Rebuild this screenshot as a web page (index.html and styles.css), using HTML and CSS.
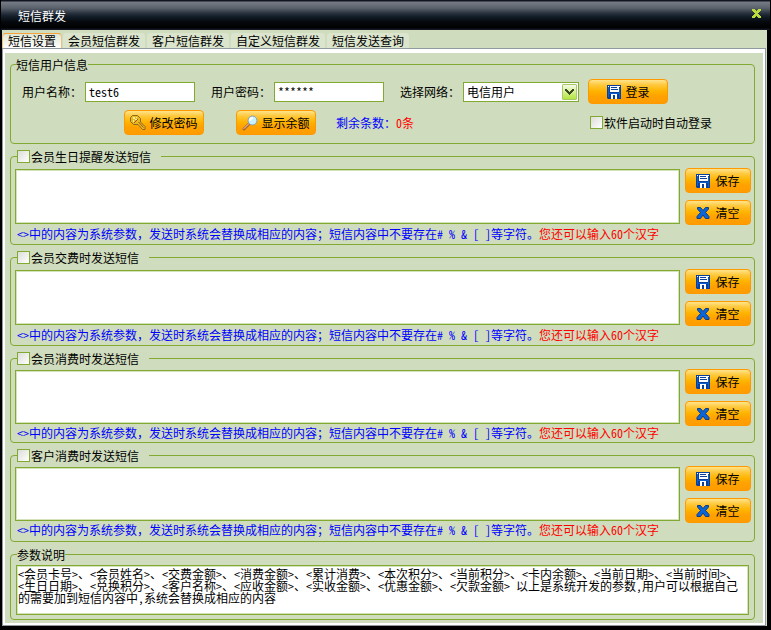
FILE: index.html
```
<!DOCTYPE html>
<html lang="zh-CN">
<head>
    <meta charset="UTF-8">
    <meta name="viewport" content="width=device-width, initial-scale=1.0">
    <title>短信群发</title>
    <link rel="stylesheet" href="styles.css">
</head>
<body>
    <!-- shared icons -->
    <svg class="defs" aria-hidden="true">
        <symbol id="icon-save" viewBox="0 0 14 14">
            <path fill="#0a3f9c" d="M0 0h14v14H1L0 13z"/>
            <path fill="#0d5fd0" d="M1 1h1v11H1zM12 3h1v10h-1zM2 8h10v1H2z"/>
            <path fill="#fff" d="M3 1h9v6H3zM4 9h6v5H4z"/>
            <path fill="#0a3f9c" d="M4 2h6v1H4zM4 4h7v1H4zM6 10h2v4H6z"/>
            <path fill="#fff" d="M1 1h1v1H1zM12 1h1v1h-1z"/>
        </symbol>
        <symbol id="icon-clear" viewBox="0 0 14 14">
            <path fill="#0a66d6" stroke="#0a3c8c" d="M1.5 1.5h3L7 4.5l2.500-3h3v1.500L9.500 6.500l3.500 4v2H9.500L7 9l-2.500 3.500H1v-2l3.500-4L1.500 3z"/>
        </symbol>
    </svg>

    <div class="window">
        <header class="titlebar">
            <h1>短信群发</h1>
            <button class="close" type="button" aria-label="关闭">
                <svg width="9" height="9" viewBox="0 0 9 9"><path fill="#b9dc3c" d="M0 0h3v1h1v1h1V1h1V0h3v2H8v1H7v1H6v1h1v1h1v1h1v2H6V8H5V7H4v1H3v1H0V7h1V6h1V5h1V4H2V3H1V2H0z"/></svg>
            </button>
        </header>

        <nav class="tabs">
            <button class="tab active" type="button">短信设置</button>
            <button class="tab" type="button">会员短信群发</button>
            <button class="tab" type="button">客户短信群发</button>
            <button class="tab" type="button">自定义短信群发</button>
            <button class="tab" type="button">短信发送查询</button>
        </nav>

        <main class="panel">
            <form class="page">
                <fieldset class="group account">
                    <legend>短信用户信息</legend>
                    <div class="row">
                        <label for="user">用户名称：</label>
                        <input class="text" id="user" type="text" value="test6">
                        <label for="pass">用户密码：</label>
                        <input class="text" id="pass" type="text" value="******">
                        <label for="network">选择网络：</label>
                        <span class="select">
                            <select id="network">
                                <option>电信用户</option>
                            </select>
                            <span class="arrow"><svg width="9" height="6" viewBox="0 0 9 6"><path fill="#3c4a1e" d="M0 0h2v1h1v1h1v1h1V2h1V1h1V0h2v2H8v1H7v1H6v1H5v1H4V5H3V4H2V3H1V2H0z"/></svg></span>
                        </span>
                        <button class="btn wide" type="button"><svg width="14" height="14"><use href="#icon-save"/></svg>登录</button>
                    </div>
                    <div class="row actions">
                        <button class="btn wide" type="button">
                            <svg width="16" height="16" viewBox="0 0 16 16">
                                <path fill="#e8b820" stroke="#8c6a1c" d="M2.500.500h5l3 3v3.500l4.500 4.500v3h-2.500L8 9.500H3.500l-3-3v-4z"/>
                                <path fill="#fff0a0" d="M3 2h2v2H3zM6 2h1v1H6zM5 4h2v1H5zM3 5h1v2H3z"/>
                                <path stroke="#a4561c" d="M4 8l4-4M8.500 7l5 5.500"/>
                            </svg>修改密码</button>
                        <button class="btn wide" type="button">
                            <svg width="16" height="16" viewBox="0 0 16 16">
                                <path stroke="#b06a30" stroke-width="3" stroke-linecap="round" d="M2 14l5-5"/>
                                <path stroke="#f0d0b0" stroke-linecap="round" d="M2 13.500l5-5"/>
                                <circle cx="10.500" cy="5.500" r="4.500" fill="#c4f2ff" stroke="#8a9ab8"/>
                                <path stroke="#fff" stroke-width="2" fill="none" d="M8 6q0-3 3-3"/>
                            </svg>显示余额</button>
                        <span class="balance">剩余条数：<b>0条</b></span>
                        <label class="check auto"><input type="checkbox">软件启动时自动登录</label>
                    </div>
                </fieldset>

                <fieldset class="group message">
                    <legend><label class="check"><input type="checkbox">会员生日提醒发送短信</label></legend>
                    <div class="editor">
                        <textarea aria-label="会员生日提醒发送短信"></textarea>
                        <div class="side">
                            <button class="btn" type="button"><svg width="14" height="14"><use href="#icon-save"/></svg>保存</button>
                            <button class="btn" type="button"><svg width="14" height="14"><use href="#icon-clear"/></svg>清空</button>
                        </div>
                    </div>
                    <p class="hint">&lt;&gt;<span class="full">中的内容为系统参数，发送时系统会替换成相应的内容；短信内容中不要存在</span># % &amp; [ ]等字符。<b>您还可以输入60个汉字</b></p>
                </fieldset>

                <fieldset class="group message">
                    <legend><label class="check"><input type="checkbox">会员交费时发送短信</label></legend>
                    <div class="editor">
                        <textarea aria-label="会员交费时发送短信"></textarea>
                        <div class="side">
                            <button class="btn" type="button"><svg width="14" height="14"><use href="#icon-save"/></svg>保存</button>
                            <button class="btn" type="button"><svg width="14" height="14"><use href="#icon-clear"/></svg>清空</button>
                        </div>
                    </div>
                    <p class="hint">&lt;&gt;<span class="full">中的内容为系统参数，发送时系统会替换成相应的内容；短信内容中不要存在</span># % &amp; [ ]等字符。<b>您还可以输入60个汉字</b></p>
                </fieldset>

                <fieldset class="group message compact">
                    <legend><label class="check"><input type="checkbox">会员消费时发送短信</label></legend>
                    <div class="editor">
                        <textarea aria-label="会员消费时发送短信"></textarea>
                        <div class="side">
                            <button class="btn" type="button"><svg width="14" height="14"><use href="#icon-save"/></svg>保存</button>
                            <button class="btn" type="button"><svg width="14" height="14"><use href="#icon-clear"/></svg>清空</button>
                        </div>
                    </div>
                    <p class="hint">&lt;&gt;<span class="full">中的内容为系统参数，发送时系统会替换成相应的内容；短信内容中不要存在</span># % &amp; [ ]等字符。<b>您还可以输入60个汉字</b></p>
                </fieldset>

                <fieldset class="group message compact last">
                    <legend><label class="check"><input type="checkbox">客户消费时发送短信</label></legend>
                    <div class="editor">
                        <textarea aria-label="客户消费时发送短信"></textarea>
                        <div class="side">
                            <button class="btn" type="button"><svg width="14" height="14"><use href="#icon-save"/></svg>保存</button>
                            <button class="btn" type="button"><svg width="14" height="14"><use href="#icon-clear"/></svg>清空</button>
                        </div>
                    </div>
                    <p class="hint">&lt;&gt;<span class="full">中的内容为系统参数，发送时系统会替换成相应的内容；短信内容中不要存在</span># % &amp; [ ]等字符。<b>您还可以输入60个汉字</b></p>
                </fieldset>

                <fieldset class="group params">
                    <legend>参数说明</legend>
                    <textarea aria-label="参数说明" readonly>&lt;会员卡号&gt;、&lt;会员姓名&gt;、&lt;交费金额&gt;、&lt;消费金额&gt;、&lt;累计消费&gt;、&lt;本次积分&gt;、&lt;当前积分&gt;、&lt;卡内余额&gt;、&lt;当前日期&gt;、&lt;当前时间&gt;、&lt;生日日期&gt;、&lt;兑换积分&gt;、&lt;客户名称&gt;、&lt;应收金额&gt;、&lt;实收金额&gt;、&lt;优惠金额&gt;、&lt;欠款金额&gt; 以上是系统开发的参数，用户可以根据自己的需要加到短信内容中，系统会替换成相应的内容</textarea>
                </fieldset>
            </form>
        </main>
    </div>
</body>
</html>
```
FILE: styles.css
```
* {
    box-sizing: border-box;
}

body {
    margin: 0;
    background: #000;
}

/* hwid = half-width latin, two letters per Chinese character */
body, button, input, select, textarea {
    font-family: "Noto Sans CJK SC", sans-serif;
    font-size: 12px;
    font-feature-settings: "hwid";
    line-height: 15px;
    color: #000;
}

/* hwid would narrow the Chinese comma too */
.full {
    font-feature-settings: normal;
}

b {
    font-weight: normal;
    color: #f00;
}

.defs {
    display: none;
}

.window {
    margin: 0 4px 4px 2px;
    background: #cfdcbd;
}

.titlebar {
    display: flex;
    align-items: center;
    justify-content: space-between;
    height: 30px;
    padding: 0 5px 0 17px;
    margin: 0 -3px 0 -1px;
    background: linear-gradient(#10151f 0, #10151f 1px, #777c85 2px, #5b626c 8px, #2b3440 13px, #14202b 16px, #05080c 22px, #000 28px, #10151f 29px);
}

.titlebar h1 {
    margin: 0;
    font-size: 12px;
    font-weight: normal;
    color: #fff;
}

.close {
    display: flex;
    align-items: center;
    justify-content: center;
    width: 17px;
    height: 17px;
    margin-top: -3px;
    padding: 0;
    border: 0;
    background: none;
    cursor: pointer;
}

.tabs {
    display: flex;
    padding: 3px 0 0;
}

.tab {
    height: 15px;
    padding: 0 5px;
    border: solid #cfdcbd;
    border-width: 0 1px;
    border-radius: 4px 4px 0 0;
    background: #dbe4cd;
    white-space: nowrap;
}

.tab.active {
    border: 1px solid #f0c080;
    border-top: 1px solid #f5a13c;
    border-bottom: 0;
    background: linear-gradient(#dfe6d2, #fff);
    line-height: 14px;
}

.panel {
    margin-right: 1px;
    padding: 4px 2px 2px 2px;
    border: 1px solid #8f9b9f;
    background: #fff;
}

.page {
    padding: 4px 8px 3px 5px;
    background: #cfdcbd;
}

.group {
    min-width: 0;
    margin: 0 0 5px;
    padding: 5px 3px 0 4px;
    border: 1px solid #82a932;
    border-radius: 4px;
}

legend {
    height: 15px;
    margin-left: 1px;
    padding: 0;
}

.account {
    padding: 7px 4px 8px 11px;
}

.account legend {
    margin-left: -6px;
}

.row {
    display: flex;
    align-items: center;
    height: 25px;
    white-space: nowrap;
}

.actions {
    margin-top: 6px;
}

.text, .select {
    height: 20px;
    border: 1px solid #82a932;
    background: #fff;
}

.text {
    width: 110px;
    margin: 0 16px 0 3px;
    padding: 0 3px;
}

.select {
    display: grid;
    width: 116px;
    margin: 0 9px 0 3px;
}

.select select, .arrow {
    grid-area: 1 / 1;
}

.select select {
    appearance: none;
    width: 100%;
    padding: 0 20px 0 3px;
    border: 0;
    background: none;
}

.arrow {
    display: flex;
    align-items: center;
    justify-content: center;
    justify-self: end;
    width: 15px;
    height: 16px;
    margin: 1px;
    border: 1px solid #a5c969;
    border-radius: 1px;
    background: linear-gradient(#f4fae6, #b4e63c);
    pointer-events: none;
}

.btn {
    display: flex;
    align-items: center;
    justify-content: center;
    gap: 5px;
    flex: none;
    width: 66px;
    height: 25px;
    padding: 0;
    border: 1px solid #ff9900;
    border-radius: 4px;
    background: linear-gradient(#ffe48c, #ffc83c 5px, #ffb400 11px, #ffa200 16px, #ff9c00);
    cursor: pointer;
}

.wide {
    width: 80px;
}

.actions .btn {
    gap: 3px;
    margin-right: 32px;
}

.actions .btn:first-child {
    margin-left: 102px;
}

.balance {
    margin-left: -12px;
    color: #00f;
}

.check {
    display: flex;
    align-items: center;
    gap: 1px;
}

.check input {
    appearance: none;
    width: 13px;
    height: 13px;
    margin: 0;
    border: 1px solid #82a932;
    background: linear-gradient(135deg, #dcdcd8, #fff);
}

.auto {
    margin: 0 38px 0 auto;
}

.message legend {
    margin-left: 2px;
    padding-right: 10px;
}

.editor {
    display: flex;
    gap: 5px;
    height: 55px;
}

textarea {
    display: block;
    flex: 1;
    min-width: 0;
    margin: 0;
    padding: 1px;
    border: 1px solid #82a932;
    background: #fff;
    box-shadow: inset 0 0 0 1px #d5e3bb;
    resize: none;
}

.side {
    display: flex;
    flex-direction: column;
    gap: 7px;
    margin-top: -1px;
}

.hint {
    margin: 0;
    padding-left: 2px;
    line-height: 20px;
    color: #00f;
    white-space: nowrap;
}

.compact {
    padding-top: 4px;
}

.compact .editor {
    height: 54px;
}

.compact .hint {
    line-height: 18px;
}

.last {
    padding-bottom: 2px;
}

.params {
    margin-bottom: 0;
    padding: 3px 5px 4px;
}

.params textarea {
    width: 100%;
    height: 50px;
    padding: 2px 6px 0 1px;
    line-height: 12px;
    overflow: hidden;
}
```
